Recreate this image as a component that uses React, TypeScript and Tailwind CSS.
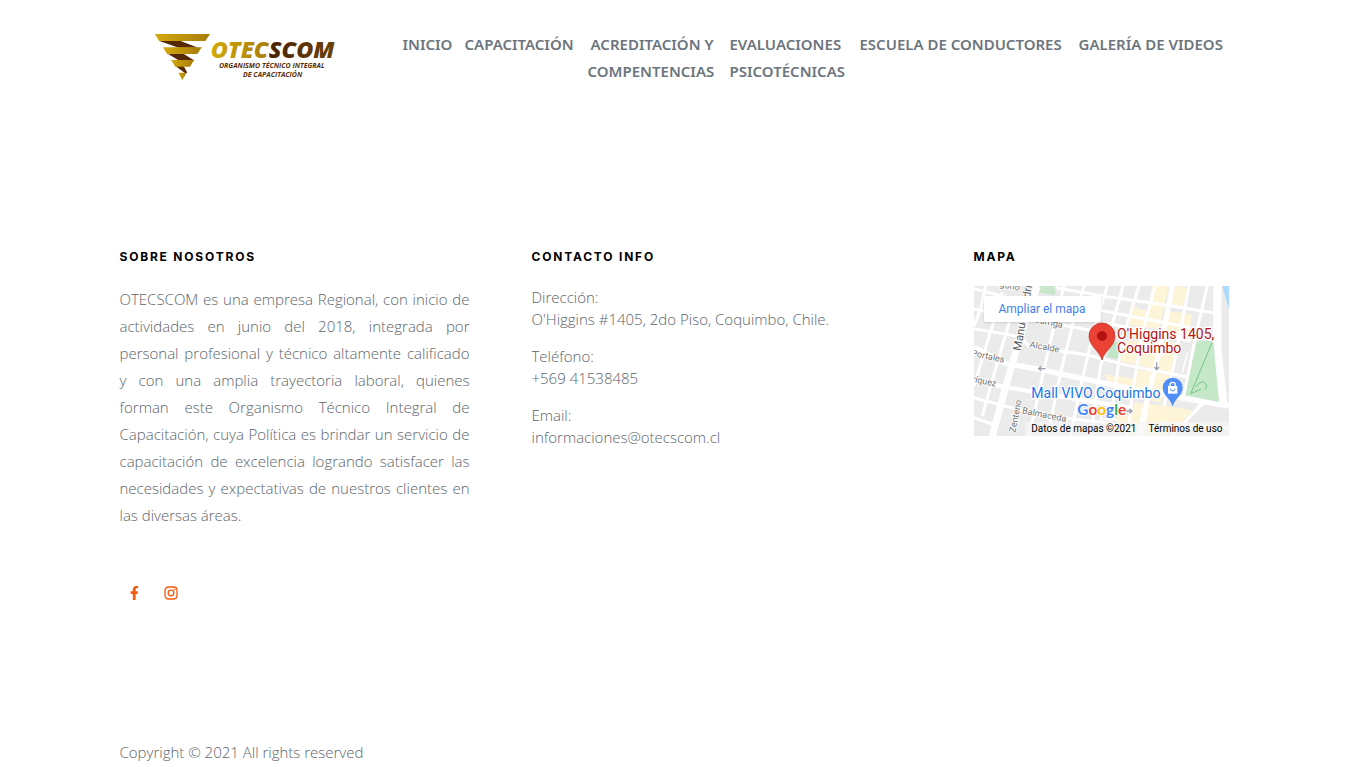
import React from 'react';

const navItems = [
  { lines: ['INICIO'], width: 'lg:w-[46px]' },
  { lines: ['CAPACITACIÓN'], width: 'lg:w-[107px]' },
  { lines: ['ACREDITACIÓN Y', 'COMPENTENCIAS'], width: 'lg:w-[126px]', align: 'text-right' },
  { lines: ['EVALUACIONES', 'PSICOTÉCNICAS'], width: 'lg:w-[114px]' },
  { lines: ['ESCUELA DE CONDUCTORES'], width: 'lg:w-[203px]' },
  { lines: ['GALERÍA DE VIDEOS'], width: 'lg:w-[144px]' },
];

const aboutLines = [
  'OTECSCOM es una empresa Regional, con inicio de',
  'actividades en junio del 2018, integrada por',
  'personal profesional y técnico altamente calificado',
  'y con una amplia trayectoria laboral, quienes',
  'forman este Organismo Técnico Integral de',
  'Capacitación, cuya Política es brindar un servicio de',
  'capacitación de excelencia logrando satisfacer las',
  'necesidades y expectativas de nuestros clientes en',
];

function Logo() {
  return (
    <svg viewBox="0 0 600 195" className="h-[65px] w-[200px]" role="img" aria-label="OTECSCOM">
      <defs>
        <linearGradient id="gold" x1="0" x2="1">
          <stop offset="0" stopColor="#d4a90c" />
          <stop offset="1" stopColor="#a67c08" />
        </linearGradient>
        <linearGradient id="otec" x1="0" x2="1">
          <stop offset="0" stopColor="#d3aa08" />
          <stop offset="1" stopColor="#a87b0a" />
        </linearGradient>
        <linearGradient id="scom" x1="0" x2="1">
          <stop offset="0" stopColor="#4a2204" />
          <stop offset="1" stopColor="#6b4208" />
        </linearGradient>
      </defs>
      <path d="M44 50H108L162 71H104ZM69 88H116L152 110H106ZM94 126H119L130 146L124 148Z" fill="#552806" />
      <path d="M33 30H198L184 51H45Z" fill="url(#gold)" />
      <path d="M57 70H173L160 90H69Z" fill="url(#gold)" />
      <path d="M81 108H150L138 128H94Z" fill="url(#gold)" />
      <path d="M103 146H128L115 168Z" fill="url(#gold)" />
      <g fontFamily="'Open Sans', sans-serif" fontStyle="italic">
        <text x="200" y="103" fontSize="70" fontWeight="800" fill="url(#otec)">OTEC</text>
        <text x="374" y="103" fontSize="70" fontWeight="800" fill="url(#scom)">SCOM</text>
        <text x="225" y="133" fontSize="21" fontWeight="700" fill="#5a3008">ORGANISMO TÉCNICO INTEGRAL</text>
        <text x="297" y="160" fontSize="21" fontWeight="700" fill="#5a3008">DE CAPACITACIÓN</text>
      </g>
    </svg>
  );
}

function MapDrawing() {
  return (
    <svg viewBox="0 0 765 450" className="block h-[150px] w-full" aria-label="Mapa de Coquimbo">
      <rect width="765" height="450" fill="#ebebeb" />
      <g fill="#fef5d9">
        <path d="M535 0H585L555 130L455 115L470 60L520 75Z" />
        <path d="M605 0L640 5L628 60L590 55Z" />
        <path d="M580 75L655 85L640 160L560 150Z" />
        <path d="M450 165L610 170L590 260L440 225Z" />
        <path d="M395 265L485 280L480 315L400 290Z" />
        <path d="M485 250L595 270L560 350L480 330Z" />
        <path d="M480 350L585 360L660 375L570 450H465Z" />
        <path d="M430 385L480 390L470 440H420Z" />
      </g>
      <path d="M190 0H240L246 20L240 28L190 18Z" fill="#c8e8cc" />
      <path d="M412 165L448 172L440 222L400 212Z" fill="#c0e5c5" />
      <path d="M745 0H765V70Z" fill="#aadaff" />
      <g fill="none" stroke="#fff" strokeWidth="9">
        <path d="M0 8L150 48M0 70L170 100L390 140L440 150" />
        <path d="M0 128L140 152L165 180L340 207L460 238L635 272" />
        <path d="M0 335L130 370L290 398L450 418M0 395L70 420" />
        <path d="M245 5L400 32L540 52L720 80M240 38L390 75L650 125M400 112L650 165" />
        <path d="M35 0L20 70L0 120M85 20L55 120L0 300M125 45L70 230L25 390M270 0L245 100L210 250L165 450M330 0L300 100L260 260L225 430M400 0L360 130L320 300L290 450" />
        <path d="M447 0L405 150L380 240L350 450M495 0L445 160L425 290L410 410M543 0L500 160L475 330L460 450M645 0L600 235L570 360M700 0L665 150L630 330M530 290L505 450M690 350L590 450M560 410L765 425" />
        <path d="M390 370L380 400H430M610 440L680 350M625 260L640 200" strokeWidth="5" />
      </g>
      <g fill="none" stroke="#fff">
        <path d="M0 184L95 232L210 253L480 310L620 335L765 360" strokeWidth="16" />
        <path d="M0 285L105 305L270 333L470 365" strokeWidth="13" />
        <path d="M190 0L145 130L100 285L55 450" strokeWidth="21" />
        <path d="M596 0L555 200L510 380L495 450" strokeWidth="15" />
        <path d="M730 0V190L748 355" strokeWidth="25" />
      </g>
      <path d="M668 165L718 165L735 348L634 328Z" fill="#c5e8c8" />
      <path d="M714 170L650 323L682 309M666 303C675 282 705 282 695 311" fill="none" stroke="#75c484" strokeWidth="3" />
      <g fill="none" stroke="#9aa0ae" strokeWidth="4">
        <path d="M215 248H194M202 241L194 248L202 254" />
        <path d="M548 229V250M541 243L548 251L555 243M455 375H474M466 368L474 375L466 382" />
      </g>
      <g fontFamily="Roboto, sans-serif" fill="#737373" stroke="#fff" strokeWidth="5" paintOrder="stroke" fontSize="27">
        <text transform="translate(76 2) rotate(12)">gono</text>
        <text transform="translate(180 108) rotate(12)">Barriga</text>
        <text transform="translate(166 184) rotate(10)">Alcalde</text>
        <text transform="translate(-9 209) rotate(12)">Portales</text>
        <text transform="translate(-7 287) rotate(12)">ríquez</text>
        <text transform="translate(143 382) rotate(11)">Balmaceda</text>
        <text transform="translate(124 440) rotate(-79)">Zenteno</text>
        <text transform="translate(140 196) rotate(-80)" fontSize="34" fill="#606060">Manuel Rodríguez</text>
      </g>
      <path d="M384 222C377 194 345 181 345 150A39 39 0 0 1 423 150C423 181 391 194 384 222Z" fill="#ea4335" stroke="#c5221f" strokeWidth="2" />
      <circle cx="384" cy="150" r="15" fill="#b31412" />
      <path d="M596 362C591 337 566 330 566 305A30 30 0 0 1 626 305C626 330 601 337 596 362Z" fill="#4f8ff7" />
      <path d="M582 300H610V323H582Z" fill="#fff" />
      <path d="M588 302V297A8 8 0 0 1 604 297V302" fill="none" stroke="#fff" strokeWidth="4" />
      <path d="M589 308A7 7 0 0 0 603 308" fill="none" stroke="#4f8ff7" strokeWidth="3" />
      <g fontFamily="Roboto, sans-serif" fontSize="42" stroke="#fff" strokeWidth="7" paintOrder="stroke">
        <text x="429" y="159" fill="#b31412">O'Higgins 1405,</text>
        <text x="429" y="201" fill="#b31412">Coquimbo</text>
        <text x="172" y="336" fill="#1a73e8">Mall VIVO Coquimbo</text>
      </g>
      <text x="310" y="388" fontFamily="Lato, sans-serif" fontWeight="700" fontSize="46" stroke="#fff" strokeWidth="5" paintOrder="stroke">
        <tspan fill="#4285f4">G</tspan>
        <tspan fill="#ea4335">o</tspan>
        <tspan fill="#fbbc04">o</tspan>
        <tspan fill="#4285f4">g</tspan>
        <tspan fill="#34a853">l</tspan>
        <tspan fill="#ea4335">e</tspan>
      </text>
    </svg>
  );
}

function Heading({ children }: { children: React.ReactNode }) {
  return (
    <h2 className="mb-4 font-[Inter,sans-serif] text-xs leading-[27px] font-bold tracking-[0.15em] text-black">
      {children}
    </h2>
  );
}

export default function App() {
  return (
    <div className="bg-white font-['Open_Sans',sans-serif] text-[15px] leading-[27px] font-light text-[#5c656d]">
      <div className="mx-auto max-w-[1110px] pl-px">
        <header className="flex flex-wrap justify-between pt-6 lg:flex-nowrap">
          <a href="#inicio" className="ml-6 shrink-0">
            <Logo />
          </a>
          <nav className="mr-[6px] flex flex-wrap gap-4 pt-[7px] font-['Noto_Sans',sans-serif] font-semibold text-[#6c757d] lg:flex-nowrap">
            {navItems.map((item) => (
              <a
                key={item.lines[0]}
                href="#seccion"
                className={`whitespace-nowrap ${item.width} ${item.align ?? ''}`}
              >
                {item.lines.map((line) => (
                  <span key={line} className="block">
                    {line}
                  </span>
                ))}
              </a>
            ))}
          </nav>
        </header>

        <footer className="pt-[154px]">
          <div className="grid gap-y-10 lg:grid-cols-[350px_1fr_255px] lg:gap-x-[62px]">
            <section>
              <Heading>SOBRE NOSOTROS</Heading>
              <p>
                {aboutLines.map((line) => (
                  <span key={line} className="block whitespace-nowrap [text-align-last:justify]">
                    {line}{' '}
                  </span>
                ))}
                <span className="block">las diversas áreas.</span>
              </p>
              <div className="mt-[54px] flex gap-4 pl-[5px] text-[#f85a0c]">
                <a href="#facebook" aria-label="Facebook" className="grid size-5 place-items-center">
                  <svg viewBox="0 0 320 512" className="h-[14px]" fill="currentColor">
                    <path d="M279 288l14-93h-89v-60c0-25 12-50 52-50h41V7s-37-7-72-7c-73 0-121 44-121 125v70H23v93h81v224h100V288z" />
                  </svg>
                </a>
                <a href="#instagram" aria-label="Instagram" className="grid size-5 place-items-center">
                  <svg viewBox="0 0 14 14" className="size-[14px]" fill="none" stroke="currentColor">
                    <rect x="1" y="1" width="12" height="12" rx="3.4" strokeWidth="1.3" />
                    <circle cx="7" cy="7" r="2.8" strokeWidth="1.3" />
                    <circle cx="10.5" cy="3.5" r=".8" fill="currentColor" stroke="none" />
                  </svg>
                </a>
              </div>
            </section>

            <section>
              <Heading>CONTACTO INFO</Heading>
              <dl className="flex flex-col gap-[15px] leading-[22px]">
                <div>
                  <dt>Dirección:</dt>
                  <dd>O'Higgins #1405, 2do Piso, Coquimbo, Chile.</dd>
                </div>
                <div>
                  <dt>Teléfono:</dt>
                  <dd>+569 41538485</dd>
                </div>
                <div>
                  <dt>Email:</dt>
                  <dd>informaciones@otecscom.cl</dd>
                </div>
              </dl>
            </section>

            <section>
              <Heading>MAPA</Heading>
              <div className="relative overflow-hidden font-[Roboto,sans-serif] font-normal">
                <MapDrawing />
                <a
                  href="#mapa"
                  className="absolute top-[10px] left-[10px] rounded-xs bg-white px-[15px] text-xs leading-[26px] text-[#427fed] shadow"
                >
                  Ampliar el mapa
                </a>
                <div className="absolute right-0 bottom-0 flex gap-3 bg-[#f5f5f5]/70 px-[6px] text-[10px] leading-[14px] text-black">
                  <span>Datos de mapas ©2021</span>
                  <a href="#terminos">Términos de uso</a>
                </div>
              </div>
            </section>
          </div>
          <p className="pt-[136px]">Copyright © 2021 All rights reserved</p>
        </footer>
      </div>
    </div>
  );
}
